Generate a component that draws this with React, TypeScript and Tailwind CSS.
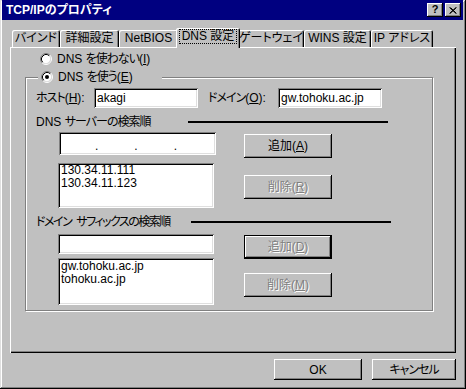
import type { ReactNode } from "react";

const RAISED = "shadow-[inset_-1px_-1px_0_#000,inset_1px_1px_0_#fff,inset_-2px_-2px_0_#808080]";
const SUNKEN = "shadow-[inset_1px_1px_0_#808080,inset_-1px_-1px_0_#fff,inset_2px_2px_0_#000,inset_-2px_-2px_0_#dfdfdf]";
const DISABLED = "text-[#808080] [text-shadow:1px_1px_0_#fff]";

const Radio = ({ checked }: { checked?: boolean }) => (
    <svg width="12" height="12" viewBox="0 0 12 12" className="shrink-0">
        <circle cx="6" cy="6" r="4.5" fill="#fff" />
        <path d="M2.11 9.89A5.5 5.5 0 0 1 9.89 2.11" fill="none" stroke="#808080" />
        <path d="M9.89 2.11A5.5 5.5 0 0 1 2.11 9.89" fill="none" stroke="#fff" />
        <path d="M2.82 9.18A4.5 4.5 0 0 1 9.18 2.82" fill="none" stroke="#000" />
        <path d="M9.18 2.82A4.5 4.5 0 0 1 2.82 9.18" fill="none" stroke="#dfdfdf" />
        {checked && <circle cx="6" cy="6" r="2" fill="#000" />}
    </svg>
);

const U = ({ children }: { children: ReactNode }) => <span className="underline underline-offset-[1px]">{children}</span>;
// narrow the kana a little, like the old bitmap UI font
const J = ({ children }: { children: ReactNode }) => <span className="tracking-[-1px]">{children}</span>;

function Btn({ children, className, disabled, dflt }: { children: ReactNode; className: string; disabled?: boolean; dflt?: boolean }) {
    return (
        <div className={`${className} ${dflt ? "border border-black" : ""} flex items-center justify-center bg-[#c0c0c0] ${RAISED} ${disabled ? DISABLED : "text-black"}`}>
            {children}
        </div>
    );
}

function Tab({ label, className, active }: { label: string; className: string; active?: boolean }) {
    if (active) {
        return (
            <div className={`${className} relative z-10 -mx-[2px] -mb-[1px] h-[20px] rounded-t-[2px] bg-[#c0c0c0] shadow-[inset_1px_1px_0_#fff,inset_-1px_0_0_#000,inset_-2px_0_0_#808080] flex items-start justify-center pt-[2px]`}>
                <span className="outline-1 outline-dotted outline-black px-[2px] leading-[13px]">{label}</span>
            </div>
        );
    }
    return (
        <div className={`${className} h-[17px] rounded-t-[2px] shadow-[inset_1px_1px_0_#fff,inset_-1px_0_0_#000,inset_-2px_0_0_#808080] flex items-center justify-center leading-[13px]`}>
            {label}
        </div>
    );
}

export default function App() {
    return (
        <div className="w-[466px] h-[389px] bg-[#c0c0c0] text-[12px] text-black font-['Liberation_Sans','Noto_Sans_CJK_JP',sans-serif] [font-feature-settings:'palt'] shadow-[inset_-1px_-1px_0_#000,inset_1px_1px_0_#dfdfdf,inset_-2px_-2px_0_#808080,inset_2px_2px_0_#fff] pl-[2px] pr-[3px] flex flex-col">
            {/* Title bar */}
            <div className="h-[20px] bg-[#000080] flex items-center pl-[4px] pr-[2px]">
                <span className="flex-1 text-white font-bold leading-[14px]">TCP/IPのプロパティ</span>
                <div className="flex gap-[1px]">
                    <div className={`w-[16px] h-[14px] bg-[#c0c0c0] ${RAISED} flex items-center justify-center font-bold text-[11px] leading-none pb-[1px]`}>?</div>
                    <div className={`w-[16px] h-[14px] bg-[#c0c0c0] ${RAISED} flex items-center justify-center ml-[1px]`}>
                        <svg width="8" height="7" viewBox="0 0 8 7">
                            <path d="M0.5 0.5L7 6.5M1.5 0.5L7.5 6.5M7 0.5L0.5 6.5M7.5 0.5L1 6.5" stroke="#000" strokeWidth="1" fill="none" />
                        </svg>
                    </div>
                </div>
            </div>

            {/* Tabs + panel */}
            <div className="ml-[8px] mt-[8px] w-[446px]">
                <div className="h-[19px] flex items-end pl-[2px]">
                    <Tab label="バインド" className="w-[48px]" />
                    <Tab label="詳細設定" className="w-[59px]" />
                    <Tab label="NetBIOS" className="w-[59px]" />
                    <Tab label="DNS 設定" className="w-[64px]" active />
                    <Tab label="ゲートウェイ" className="w-[66px]" />
                    <Tab label="WINS 設定" className="w-[67px]" />
                    <Tab label="IP アドレス" className="w-[62px]" />
                </div>
                <div className="h-[306px] shadow-[inset_1px_1px_0_#fff,inset_-1px_-1px_0_#000,inset_-2px_-2px_0_#808080] pl-[15px] pt-[6px]">
                    <div className="ml-[15px] h-[12px] flex items-center gap-[5px]">
                        <Radio />
                        <span className="leading-[12px]">DNS <J>を使わない</J>(<U>I</U>)</span>
                    </div>

                    {/* Group box */}
                    <div className="relative mt-[12px] w-[408px] h-[234px] border border-[#808080] shadow-[inset_1px_1px_0_#fff,1px_1px_0_#fff] pl-[10px] pt-[10px]">
                        <div className="absolute left-[12px] -top-[7px] w-[124px] h-[12px] bg-[#c0c0c0] pl-[3px] flex items-center gap-[5px]">
                            <Radio checked />
                            <span className="leading-[12px]">DNS <J>を使う</J>(<U>E</U>)</span>
                        </div>

                        <div className="flex items-center">
                            <span className="w-[58px]"><J>ホスト</J>(<U>H</U>):</span>
                            <div className={`w-[104px] h-[20px] bg-white ${SUNKEN} pl-[3px] flex items-center`}>akagi</div>
                            <span className="ml-[10px] w-[70px]"><J>ドメイン</J>(<U>O</U>):</span>
                            <div className={`w-[104px] h-[20px] bg-white ${SUNKEN} pl-[3px] flex items-center`}>gw.tohoku.ac.jp</div>
                        </div>

                        <div className="mt-[7px] h-[14px] flex items-center">
                            <span className="w-[152px] leading-[14px]">DNS <J>サーバーの検索順</J></span>
                            <div className="w-[200px] h-[2px] bg-black" />
                        </div>

                        <div className="flex">
                            <div className="ml-[22px] w-[158px]">
                                <div className={`ml-[1px] mt-[3px] w-[157px] h-[23px] bg-white ${SUNKEN} flex items-end pb-[3px] pl-[36px] leading-[12px]`}>
                                    <span>.</span>
                                    <span className="ml-[36px]">.</span>
                                    <span className="ml-[36px]">.</span>
                                </div>
                                <div className={`mt-[8px] w-[156px] h-[45px] bg-white ${SUNKEN} pl-[3px] pt-[1px] leading-[13px]`}>
                                    <div>130.34.11.111</div>
                                    <div>130.34.11.123</div>
                                </div>
                            </div>
                            <div className="ml-[28px]">
                                <Btn className="mt-[5px] w-[88px] h-[24px]">追加(<U>A</U>)</Btn>
                                <Btn className="mt-[17px] w-[88px] h-[24px]" disabled>削除(<U>R</U>)</Btn>
                            </div>
                        </div>

                        <div className="mt-[7px] h-[14px] flex items-center">
                            <span className="w-[155px] leading-[14px] whitespace-nowrap tracking-[-1.5px]">ドメイン<span className="ml-[5px]">サフィックスの検索順</span></span>
                            <div className="w-[200px] h-[2px] bg-black" />
                        </div>

                        <div className="flex">
                            <div className="ml-[22px] w-[158px]">
                                <div className={`mt-[5px] w-[156px] h-[20px] bg-white ${SUNKEN}`} />
                                <div className={`mt-[4px] w-[156px] h-[47px] bg-white ${SUNKEN} pl-[3px] pt-[2px] leading-[13px]`}>
                                    <div>gw.tohoku.ac.jp</div>
                                    <div>tohoku.ac.jp</div>
                                </div>
                            </div>
                            <div className="ml-[28px]">
                                <Btn className="mt-[6px] w-[88px] h-[24px]" disabled dflt>追加(<U>D</U>)</Btn>
                                <Btn className="mt-[14px] w-[88px] h-[24px]" disabled>削除(<U>M</U>)</Btn>
                            </div>
                        </div>
                    </div>
                </div>
            </div>

            {/* Dialog buttons */}
            <div className="ml-[8px] mt-[6px] w-[446px] flex justify-end gap-[10px]">
                <Btn className="w-[88px] h-[21px]">OK</Btn>
                <Btn className="w-[84px] h-[21px]"><J>キャンセル</J></Btn>
            </div>
        </div>
    );
}
